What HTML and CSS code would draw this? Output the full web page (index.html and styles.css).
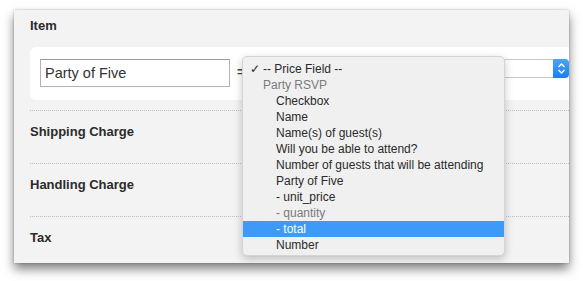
FILE: index.html
```html
<!DOCTYPE html>
<html lang="en">
<head>
    <meta charset="UTF-8">
    <title>Item pricing</title>
    <link rel="stylesheet" href="styles.css">
</head>
<body>
    <div class="window">
        <section class="item">
            <h2>Item</h2>
            <div class="item-row">
                <input type="text" class="item-name" value="Party of Five">
                <span class="equals">=</span>
                <div class="select">
                    <span class="select-field"></span>
                    <span class="stepper">
                        <svg width="9" height="13" viewBox="0 0 9 13">
                            <path d="M1.5 5 L4.5 2 L7.5 5 M1.5 8 L4.5 11 L7.5 8" fill="none" stroke="#fff" stroke-width="1.4"/>
                        </svg>
                    </span>
                </div>
            </div>
        </section>

        <section class="charge"><h2>Shipping Charge</h2></section>
        <section class="charge"><h2>Handling Charge</h2></section>
        <section class="charge"><h2>Tax</h2></section>

        <!-- open popup of the price field select -->
        <ul class="menu">
            <li class="checked">-- Price Field --</li>
            <li class="group">Party RSVP</li>
            <li class="sub">Checkbox</li>
            <li class="sub">Name</li>
            <li class="sub">Name(s) of guest(s)</li>
            <li class="sub">Will you be able to attend?</li>
            <li class="sub">Number of guests that will be attending</li>
            <li class="sub">Party of Five</li>
            <li class="sub">- unit_price</li>
            <li class="sub disabled">- quantity</li>
            <li class="sub active">- total</li>
            <li class="sub">Number</li>
        </ul>
    </div>
</body>
</html>
```

FILE: styles.css
```css
* {
    margin: 0;
    padding: 0;
    box-sizing: border-box;
}

html,
body {
    height: 100%;
}

body {
    background: #fff;
    font-family: 'Liberation Sans', Arial, sans-serif;
    color: #222;
    padding: 10px 0 0 14px;
}

.window {
    position: relative;
    width: 555px;
    height: 253px;
    background: #f3f3f3;
    overflow: hidden;
    box-shadow: 0 6px 10px rgba(0, 0, 0, 0.5), 0 0 2px rgba(0, 0, 0, 0.25);
}

h2 {
    font-size: 13px;
    font-weight: 700;
    line-height: 16px;
    color: #2b2b2b;
}

.item {
    padding: 8px 0 10px 16px;
}

.item h2 {
    margin-bottom: 13px;
}

.item-row {
    display: flex;
    align-items: flex-start;
    height: 53px;
    padding: 12px 0 0 10px;
    background: #fff;
    border-radius: 6px 0 0 6px;
}

.item-name {
    width: 190px;
    height: 28px;
    padding: 0 4px;
    border: 1px solid #b4b4b4;
    border-top-color: #999;
    font-family: 'Liberation Sans', Arial, sans-serif;
    font-size: 14.5px;
    color: #333;
    outline: none;
}

.equals {
    margin: 5px 0 0 7px;
    font-size: 13px;
    font-weight: 700;
    color: #444;
}

.select {
    display: flex;
    flex: 1;
    height: 19px;
    margin-left: 6px;
}

.select-field {
    flex: 1;
    border: 1px solid #c8c8c8;
    border-right: none;
    border-radius: 3px 0 0 3px;
    background: #fff;
}

.stepper {
    display: flex;
    align-items: center;
    justify-content: center;
    width: 16px;
    border-radius: 0 4px 4px 0;
    background: linear-gradient(#4aa4fb, #1a7ff3);
}

.charge {
    margin-left: 16px;
    height: 53px;
    padding-top: 13px;
    border-top: 1px dotted #bdbdbd;
}

.menu {
    position: absolute;
    left: 228px;
    top: 46px;
    width: 263px;
    height: 200px;
    padding: 4px 0;
    list-style: none;
    background: #f0f0f0;
    border: 1px solid #d4d4d4;
    border-radius: 5px;
    box-shadow: 0 3px 8px rgba(0, 0, 0, 0.22);
    font-size: 12px;
    color: #2a2a2a;
}

.menu li {
    height: 16px;
    line-height: 16px;
    padding-left: 20px;
    white-space: nowrap;
}

.menu .checked {
    position: relative;
}

.menu .checked::before {
    content: "\2713";
    position: absolute;
    left: 7px;
    font-size: 12px;
}

.menu .sub {
    padding-left: 33px;
}

.menu .group,
.menu .disabled {
    color: #7b7b7b;
}

.menu .active {
    background: #3d9af9;
    color: #fff;
}
```
